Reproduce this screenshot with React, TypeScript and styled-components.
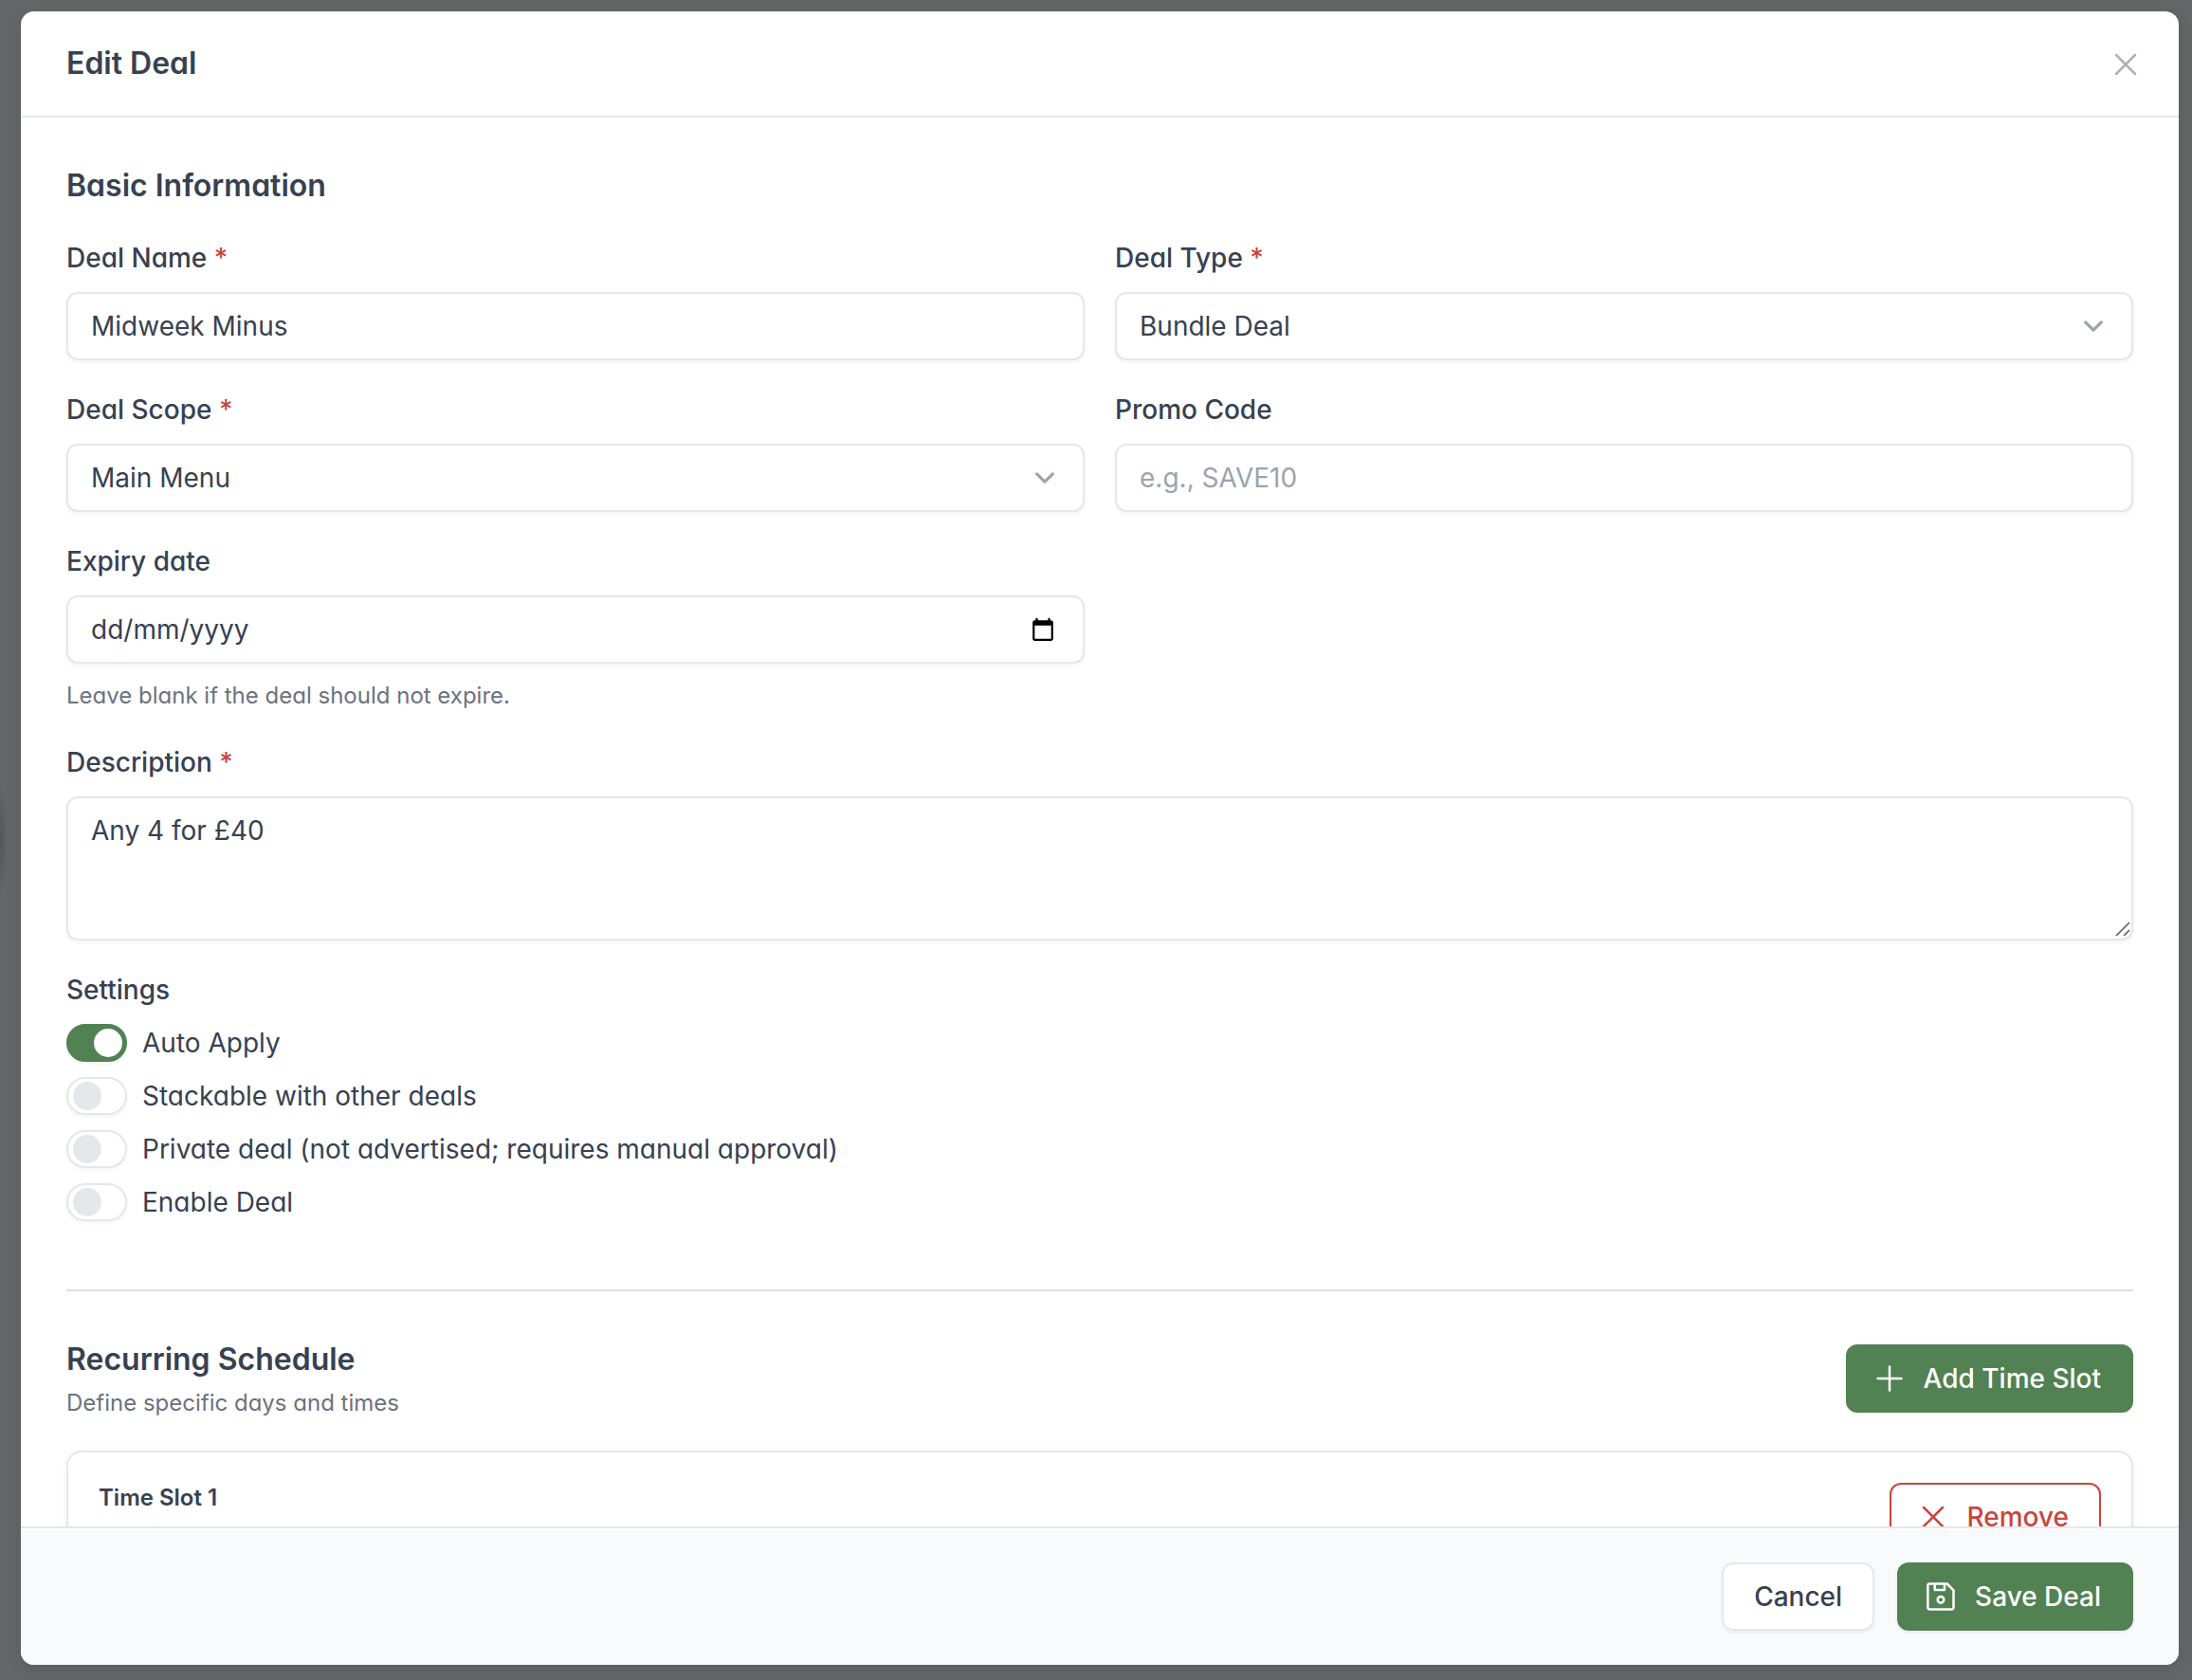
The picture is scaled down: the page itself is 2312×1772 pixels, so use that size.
import React, { useState } from "react";
import styled, { createGlobalStyle, css } from "styled-components";

const c = {
  text: "#374151",
  muted: "#6b7280",
  faint: "#9ca3af",
  border: "#e5e7eb",
  green: "#528153",
  red: "#c9453c",
};

const GlobalStyle = createGlobalStyle`
  *, *::before, *::after { box-sizing: border-box; }
  html, body, #root { height: 100%; }
  body {
    margin: 0;
    background: #646567;
    color: ${c.text};
    font-family: Inter, "Liberation Sans", sans-serif;
    font-size: 28px;
    line-height: 40px;
    font-feature-settings: "cv11";
    -webkit-font-smoothing: antialiased;
  }
  button, input, select, textarea {
    font-family: inherit;
    font-size: inherit;
    line-height: inherit;
    font-feature-settings: normal;
    color: inherit;
    margin: 0;
  }
`;

const Backdrop = styled.div`
  height: 100vh;
  min-height: 600px;
  padding: 12px 14px 16px 22px;
  background: radial-gradient(ellipse 8px 60px at 0 50%, #555658 0%, #646567 100%);
`;

const Dialog = styled.form`
  height: 100%;
  display: flex;
  flex-direction: column;
  background: #fff;
  border-radius: 14px;
  overflow: hidden;
  box-shadow: 0 4px 16px rgba(0, 0, 0, 0.08);
`;

const Header = styled.header`
  flex: none;
  height: 112px;
  padding: 0 36px 0 48px;
  display: flex;
  align-items: center;
  justify-content: space-between;
  border-bottom: 2px solid ${c.border};
`;

const Title = styled.h2`
  margin: 0;
  font-size: 32px;
  line-height: 48px;
  font-weight: 600;
`;

const IconButton = styled.button`
  display: flex;
  padding: 2px 0 0;
  border: 0;
  background: none;
  color: #aeb0b8;
  cursor: pointer;
`;

const Body = styled.div`
  flex: 1;
  min-height: 0;
  overflow: hidden;
  padding: 48px;
`;

const Section = styled.section`
  display: flex;
  flex-direction: column;
  gap: 32px;

  & + & {
    margin-top: 72px;
    padding-top: 48px;
    border-top: 2px solid #dcdee3;
  }
`;

const FieldGrid = styled.div`
  display: grid;
  grid-template-columns: 1fr 1fr;
  gap: 32px;
`;

const Field = styled.div`
  display: flex;
  flex-direction: column;
  gap: 16px;
`;

const Label = styled.label`
  font-weight: 500;
`;

const Required = styled.span`
  color: ${c.red};
`;

const Hint = styled.p`
  margin: 0;
  font-size: 24px;
  line-height: 36px;
  color: ${c.muted};
`;

const ControlWrap = styled.div`
  position: relative;
  display: flex;
`;

const control = css`
  width: 100%;
  padding: 14px 24px;
  border: 2px solid ${c.border};
  border-radius: 12px;
  background: #fff;
  box-shadow: 0 2px 4px rgba(0, 0, 0, 0.05);
  appearance: none;
  outline: none;
`;

const Input = styled.input<{ $dark?: boolean }>`
  ${control}
  height: 72px;
  &::placeholder {
    color: ${(p) => (p.$dark ? c.text : c.faint)};
    opacity: 1;
  }
`;

const Select = styled.select`
  ${control}
  height: 72px;
`;

const TextArea = styled.textarea`
  ${control}
  display: block;
  height: 152px;
  resize: none;
`;

const Adornment = styled.span<{ $right: number }>`
  position: absolute;
  top: 0;
  bottom: 0;
  right: ${(p) => p.$right}px;
  display: flex;
  align-items: center;
  pointer-events: none;
`;

const Grip = styled.svg`
  position: absolute;
  right: 2px;
  bottom: 2px;
  pointer-events: none;
`;

const Settings = styled.fieldset`
  margin: 0;
  padding: 0;
  border: 0;
  display: flex;
  flex-direction: column;
  gap: 16px;
`;

const Legend = styled.legend`
  padding: 0;
  margin-bottom: 16px;
  font-weight: 500;
`;

const SwitchRow = styled.label`
  display: flex;
  align-items: center;
  gap: 16px;
`;

const Switch = styled.input`
  appearance: none;
  flex: none;
  display: flex;
  align-items: center;
  width: 64px;
  height: 40px;
  margin: 0;
  padding: 0 3px 0 5px;
  border: 2px solid ${c.border};
  border-radius: 20px;
  background: #fff;
  box-shadow: 0 2px 4px rgba(0, 0, 0, 0.05);
  cursor: pointer;

  &::before {
    content: "";
    width: 30px;
    height: 30px;
    border-radius: 50%;
    background: ${c.border};
  }

  &:checked {
    justify-content: flex-end;
    border-color: ${c.green};
    background: ${c.green};
  }

  &:checked::before {
    background: #fff;
  }
`;

const SplitRow = styled.div<{ $top?: boolean }>`
  display: flex;
  align-items: ${(p) => (p.$top ? "flex-start" : "center")};
  justify-content: space-between;
`;

const HeadingGroup = styled.div`
  display: flex;
  flex-direction: column;
  gap: 4px;
`;

const Card = styled.div`
  height: 320px;
  padding: 32px;
  border: 2px solid ${c.border};
  border-radius: 16px;
  box-shadow: 0 2px 12px rgba(0, 0, 0, 0.04);
`;

const CardTitle = styled.h4`
  margin: 0;
  font-size: 24px;
  line-height: 32px;
  font-weight: 600;
`;

const tones = {
  primary: css`
    color: #fff;
    background: ${c.green};
    border-color: ${c.green};
  `,
  plain: css`
    color: ${c.text};
    background: #fff;
    border-color: ${c.border};
  `,
  danger: css`
    color: ${c.red};
    background: #fff;
    border-color: ${c.red};
  `,
};

const Button = styled.button<{ $tone: keyof typeof tones }>`
  display: inline-flex;
  align-items: center;
  gap: 16px;
  height: 72px;
  padding: 0 32px;
  border: 2px solid;
  border-radius: 12px;
  font-weight: 500;
  white-space: nowrap;
  box-shadow: 0 2px 4px rgba(0, 0, 0, 0.05);
  cursor: pointer;
  ${(p) => tones[p.$tone]}

  svg {
    flex: none;
    margin-left: -8px;
  }
`;

const Footer = styled.footer`
  flex: none;
  display: flex;
  justify-content: flex-end;
  gap: 24px;
  padding: 36px 48px;
  background: #f9fafc;
  border-top: 2px solid ${c.border};
`;

function Glyph({ d }: { d: string }) {
  return (
    <svg
      width="40"
      height="40"
      viewBox="0 0 24 24"
      fill="none"
      stroke="currentColor"
      strokeWidth="1.5"
      strokeLinecap="round"
      strokeLinejoin="round"
      aria-hidden="true"
    >
      <path d={d} />
    </svg>
  );
}

const X_PATH = "M6 18 18 6M6 6l12 12";
const PLUS_PATH = "M12 4.5v15m7.5-7.5h-15";
const SAVE_PATH =
  "M5 3.9h11l4.100 4.100v10.900a1.200 1.200 0 0 1-1.200 1.200H5a1.200 1.200 0 0 1-1.200-1.200V5.100A1.200 1.200 0 0 1 5 3.900ZM8.200 4v3.800h6.200V4M12 12a2 2 0 1 0 0 4 2 2 0 0 0 0-4Z";

const Chevron = () => (
  <Adornment $right={21}>
    <svg width="42" height="42" viewBox="0 0 20 20" fill="none" stroke={c.faint} strokeWidth="1.5" strokeLinecap="round" strokeLinejoin="round">
      <path d="m6 8 4 4 4-4" />
    </svg>
  </Adornment>
);

const Calendar = () => (
  <Adornment $right={31}>
    <svg width="26" height="26" viewBox="0 0 24 24" fill="#000">
      <path d="M20 3h-1V1h-2v2H7V1H5v2H4c-1.100 0-2 .9-2 2v16c0 1.100.9 2 2 2h16c1.100 0 2-.9 2-2V5c0-1.100-.9-2-2-2zm0 18H4V8h16v13z" />
    </svg>
  </Adornment>
);

const Star = () => <Required aria-hidden="true">*</Required>;

const SETTINGS = [
  { id: "auto", label: "Auto Apply", on: true },
  { id: "stack", label: "Stackable with other deals", on: false },
  { id: "private", label: "Private deal (not advertised; requires manual approval)", on: false },
  { id: "enable", label: "Enable Deal", on: false },
];

export default function App() {
  const [name, setName] = useState("Midweek Minus");
  const [description, setDescription] = useState("Any 4 for £40");

  return (
    <>
      <GlobalStyle />
      <Backdrop>
        <Dialog role="dialog" aria-labelledby="title" onSubmit={(e) => e.preventDefault()}>
          <Header>
            <Title id="title">Edit Deal</Title>
            <IconButton type="button" aria-label="Close">
              <Glyph d={X_PATH} />
            </IconButton>
          </Header>

          <Body>
            <Section>
              <Title as="h3">Basic Information</Title>
              <FieldGrid>
                <Field>
                  <Label htmlFor="name">Deal Name <Star /></Label>
                  <Input id="name" value={name} onChange={(e) => setName(e.target.value)} />
                </Field>
                <Field>
                  <Label htmlFor="type">Deal Type <Star /></Label>
                  <ControlWrap>
                    <Select id="type"><option>Bundle Deal</option></Select>
                    <Chevron />
                  </ControlWrap>
                </Field>
                <Field>
                  <Label htmlFor="scope">Deal Scope <Star /></Label>
                  <ControlWrap>
                    <Select id="scope"><option>Main Menu</option></Select>
                    <Chevron />
                  </ControlWrap>
                </Field>
                <Field>
                  <Label htmlFor="promo">Promo Code</Label>
                  <Input id="promo" placeholder="e.g., SAVE10" />
                </Field>
                <Field>
                  <Label htmlFor="expiry">Expiry date</Label>
                  <ControlWrap>
                    <Input id="expiry" $dark placeholder="dd/mm/yyyy" inputMode="numeric" />
                    <Calendar />
                  </ControlWrap>
                  <Hint>Leave blank if the deal should not expire.</Hint>
                </Field>
              </FieldGrid>
              <Field>
                <Label htmlFor="description">Description <Star /></Label>
                <ControlWrap>
                  <TextArea id="description" value={description} onChange={(e) => setDescription(e.target.value)} />
                  <Grip width="18" height="18" viewBox="0 0 18 18" stroke="#555" strokeWidth="1.5" aria-hidden="true">
                    <path d="M2 15 16 1M10 15l6-6" />
                  </Grip>
                </ControlWrap>
              </Field>
              <Settings>
                <Legend>Settings</Legend>
                {SETTINGS.map((s) => (
                  <SwitchRow key={s.id} htmlFor={s.id}>
                    <Switch id={s.id} type="checkbox" role="switch" defaultChecked={s.on} />
                    {s.label}
                  </SwitchRow>
                ))}
              </Settings>
            </Section>

            <Section>
              <SplitRow>
                <HeadingGroup>
                  <Title as="h3">Recurring Schedule</Title>
                  <Hint>Define specific days and times</Hint>
                </HeadingGroup>
                <Button type="button" $tone="primary">
                  <Glyph d={PLUS_PATH} />
                  Add Time Slot
                </Button>
              </SplitRow>
              <Card>
                <SplitRow $top>
                  <CardTitle>Time Slot 1</CardTitle>
                  <Button type="button" $tone="danger">
                    <Glyph d={X_PATH} />
                    Remove
                  </Button>
                </SplitRow>
              </Card>
            </Section>
          </Body>

          <Footer>
            <Button type="button" $tone="plain">Cancel</Button>
            <Button type="submit" $tone="primary">
              <Glyph d={SAVE_PATH} />
              Save Deal
            </Button>
          </Footer>
        </Dialog>
      </Backdrop>
    </>
  );
}
